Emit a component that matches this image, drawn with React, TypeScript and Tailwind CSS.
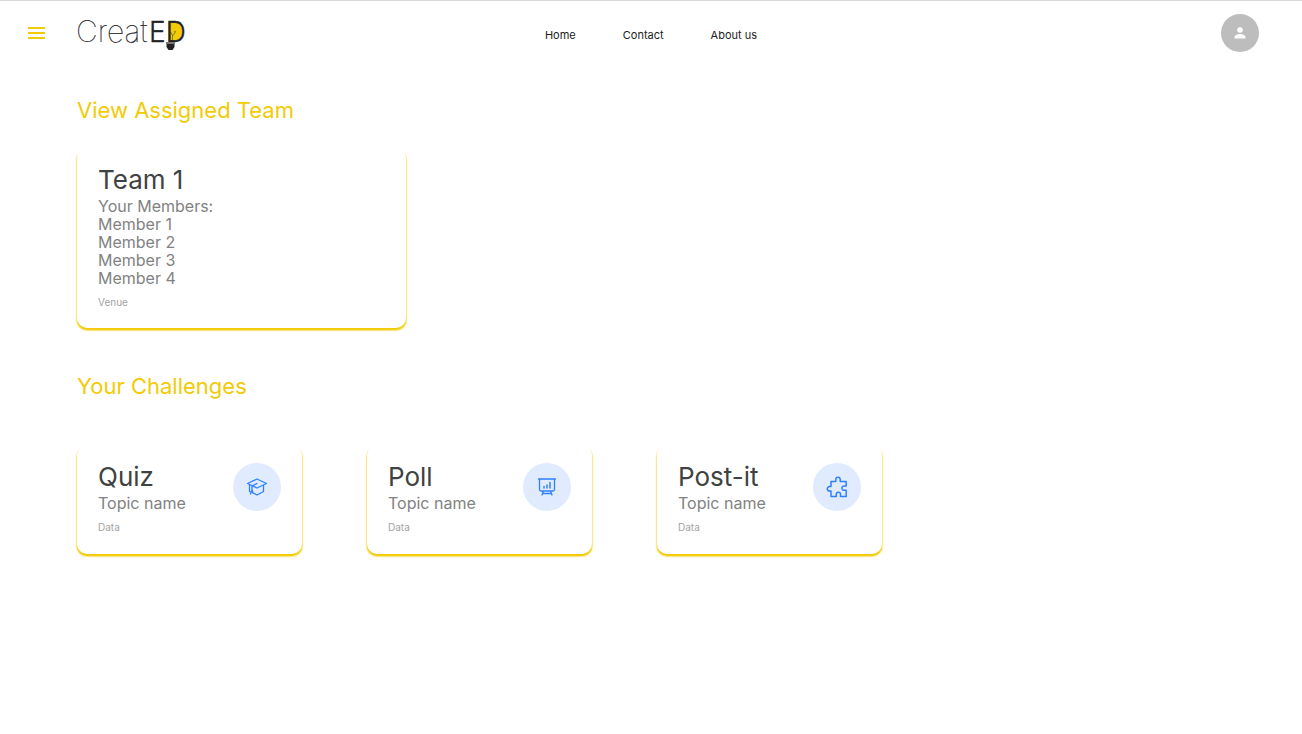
import type { ReactNode } from "react";

function Logo() {
  return (
    <svg width="110" height="42" viewBox="0 0 110 42" role="img" aria-label="CreatED">
      <path d="M91 10h4c7 0 10 4 10 9.500s-3 9.500-10 9.500h-4z" fill="#f2cb05" />
      <path d="M93.500 20l2 3v6M95.500 24l3-4M97 20l2-1" fill="none" stroke="#6b5c12" strokeWidth="0.700" />
      <text x="-1" y="30" fontFamily="Inter, sans-serif" fontWeight="100" fontSize="30" fill="#222" stroke="#222" strokeWidth="0.200">
        Creat
      </text>
      <text x="72" y="30" fontFamily="Inter, sans-serif" fontWeight="300" fontSize="28" fill="#222" stroke="#222" strokeWidth="0.300">
        ED
      </text>
      <path d="M89 30h9v2h-9z" fill="#777" />
      <path d="M89.500 32h8v3l-2 3h-4l-2-3z" fill="#222" />
    </svg>
  );
}

function GraduationIcon() {
  return (
    <svg width="22" height="22" viewBox="0 0 22 22" fill="none" stroke="#2f80ff" strokeWidth="1.300" strokeLinejoin="round" strokeLinecap="round" aria-hidden="true">
      <path d="M1.500 7.500L11 3l9.500 4.500L11 12z" />
      <path d="M3.500 9v6.500l1 .5M17.500 9.500v6L11 19l-4.500-2.500M11 7.500L6 10v4L4.500 18M6 14l1 3" />
    </svg>
  );
}

function PresentationIcon() {
  return (
    <svg width="22" height="22" viewBox="0 0 22 22" fill="none" stroke="#2f80ff" strokeWidth="1.300" strokeLinejoin="round" strokeLinecap="round" aria-hidden="true">
      <path d="M2.500 3h17M3.500 3v10.500q0 1.500 1.500 1.500h12q1.500 0 1.500-1.500V3M7.500 15l-1.500 4M14.500 15l1.500 4M7 17.500h8" />
      <path d="M8 12v-1.500M11 12V9M14 12V6.500" strokeWidth="1.500" />
    </svg>
  );
}

function PuzzleIcon() {
  return (
    <svg width="24" height="24" viewBox="0 0 24 24" fill="none" stroke="#2f80ff" strokeWidth="1.500" strokeLinejoin="round" aria-hidden="true">
      <path d="M6 6.500h4.800V4.500a2.200 2.200 0 1 1 4.400 0v2h6v4.500h-1.500a2.200 2.200 0 1 0 0 4.200h1.500V21.500h-5.700v-1.500a2.200 2.200 0 1 0-4.200 0v1.500H6V16H4.500a2.200 2.200 0 1 1 0-4.400H6z" />
    </svg>
  );
}

function SectionTitle({ children }: { children: ReactNode }) {
  return <h2 className="text-[22px] leading-7 text-[#f2cb05]">{children}</h2>;
}

const cardStyle = "rounded-[10px] bg-white px-[21px] shadow-[0_2px_2px_#f2cb05,0_2px_2px_#f2cb05]";

const challenges = [
  { title: "Quiz", icon: <GraduationIcon /> },
  { title: "Poll", icon: <PresentationIcon /> },
  { title: "Post-it", icon: <PuzzleIcon /> },
];

const links = ["Home", "Contact", "About us"];

export default function App() {
  return (
    <div className="min-h-screen border-t border-[#d9d9d9] bg-white font-['Inter',sans-serif]">
      <header className="grid grid-cols-[1fr_auto_1fr] items-center px-7 pt-[11px]">
        <div className="flex items-center gap-8">
          <button type="button" aria-label="Menu" className="w-[17px]">
            <svg width="17" height="12" viewBox="0 0 17 12" stroke="#f2cb05" strokeWidth="2" aria-hidden="true">
              <path d="M0 1h17M0 6h17M0 11h17" />
            </svg>
          </button>
          <a href="#home" aria-label="CreatED">
            <Logo />
          </a>
        </div>
        <nav className="flex gap-[47px] pt-1 text-[11px] leading-4 text-[#222]">
          {links.map((link) => (
            <a key={link} href={`#${link.toLowerCase().replace(" ", "-")}`}>
              {link}
            </a>
          ))}
        </nav>
        <button type="button" aria-label="Account" className="mr-[15px] flex size-[38px] items-center justify-center justify-self-end rounded-full bg-[#bdbdbd]">
          <svg width="12" height="12" viewBox="0 0 12 12" fill="white" aria-hidden="true">
            <circle cx="6" cy="3" r="2.800" />
            <path d="M0.500 11.500V10c0-2 3.500-3 5.500-3s5.500 1 5.500 3v1.500z" />
          </svg>
        </button>
      </header>

      <main className="px-[77px] pt-[42px] pb-10">
        <SectionTitle>View Assigned Team</SectionTitle>
        <section className={`${cardStyle} mt-6 w-full max-w-[329px] pt-4 pb-5`}>
          <h3 className="text-[26px] leading-8 text-[#3f4242]">Team 1</h3>
          <div className="mt-px text-[16px] leading-[18px] text-[#828282]">
            <p>Your Members:</p>
            <ul>
              {[1, 2, 3, 4].map((n) => (
                <li key={n}>Member {n}</li>
              ))}
            </ul>
          </div>
          <p className="mt-[9px] text-[10px] leading-3 text-[#a3a3a3]">Venue</p>
        </section>

        <div className="mt-11">
          <SectionTitle>Your Challenges</SectionTitle>
        </div>
        <div className="mt-[45px] flex flex-wrap gap-x-[65px] gap-y-8">
          {challenges.map(({ title, icon }) => (
            <section key={title} className={`${cardStyle} flex w-[225px] justify-between pt-4 pb-[21px]`}>
              <div>
                <h3 className="text-[26px] leading-8 text-[#3f4242]">{title}</h3>
                <p className="mt-px text-[16px] leading-[18px] text-[#828282]">Topic name</p>
                <p className="mt-[9px] text-[10px] leading-3 text-[#a3a3a3]">Data</p>
              </div>
              <div className="mt-0.5 flex size-12 items-center justify-center rounded-full bg-[#e0ebff]">{icon}</div>
            </section>
          ))}
        </div>
      </main>
    </div>
  );
}
